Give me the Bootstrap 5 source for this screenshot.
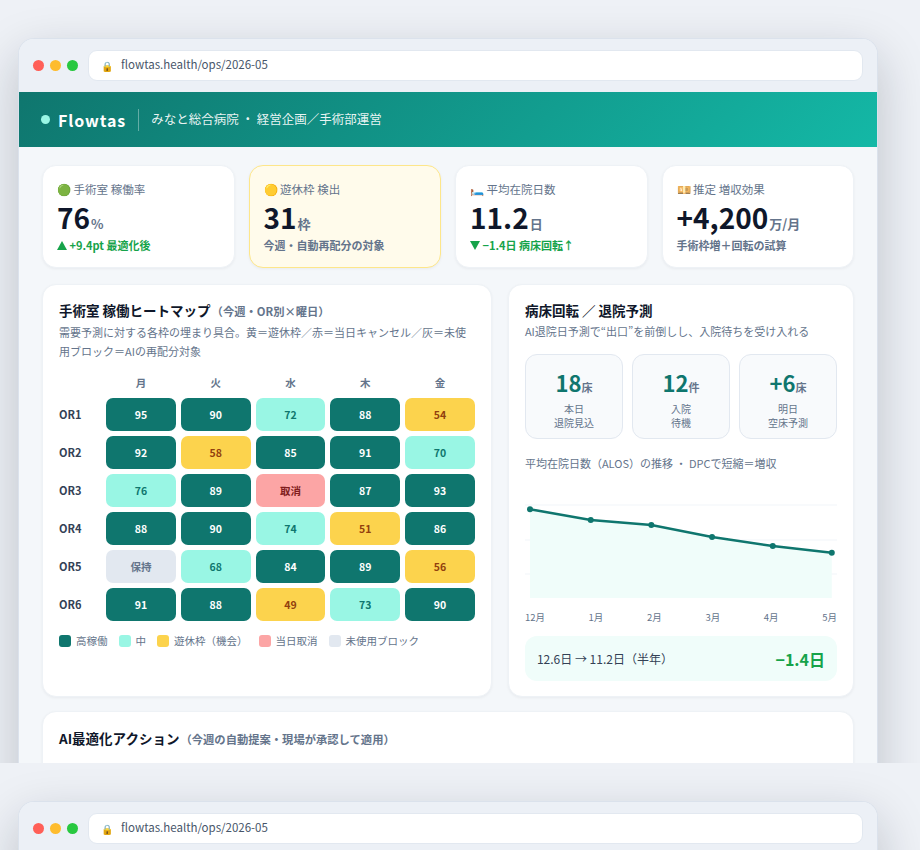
<!DOCTYPE html>
<html lang="ja">
<head>
<meta charset="utf-8">
<title>Flowtas</title>
<link href="https://cdn.jsdelivr.net/npm/bootstrap@5.3.0/dist/css/bootstrap.min.css" rel="stylesheet">
<style>
html,body{background:#eef1f6;}
body{font-family:"Noto Sans CJK JP","Noto Sans",sans-serif;color:#0f172a;margin:0;}
.shot{height:763px;overflow:hidden;padding:38px 42px 0 18px;background:#eef1f6;}
.shot-last{height:400px;}
.win{border:1px solid #dbe2ec;border-bottom:0;border-radius:16px 16px 0 0;background:#f4f7fa;box-shadow:0 18px 50px rgba(15,23,42,.22);overflow:hidden;min-height:900px;}
.bar{height:53px;background:#ecf0f6;padding:0 14px 1px 14px;}
.dots{column-gap:6px;}
.dotx{width:11px;height:11px;border-radius:50%;}
.d-r{background:#ff5f57;}
.d-y{background:#febc2e;}
.d-g{background:#28c840;}
.addr{height:31px;background:#fff;border:1px solid #e2e8f0;border-radius:9px;padding-left:12px;font-size:11.5px;color:#475569;margin-left:10px;gap:8px;}
.lockx{font-size:10px;}
.hdr{height:55px;background:linear-gradient(135deg,#0f766e,#14b8a6);padding:0 22px;color:#fff;}
.hdot{width:9px;height:9px;border-radius:50%;background:#99f6e4;margin-right:8px;}
.brand{font-size:16px;font-weight:700;letter-spacing:.9px;line-height:1;}
.hsep{width:1px;height:22px;background:rgba(255,255,255,.35);margin:0 12px 0 12px;}
.hsub{font-size:12.5px;color:rgba(255,255,255,.92);}
.body-x{padding:18px 23px 0 23px;}
.kpis{display:grid;grid-template-columns:repeat(4,1fr);gap:14px;}
.kpi{background:#fff;border:1px solid #eef2f6;border-radius:14px;padding:15px 14px 12px;height:103px;box-shadow:0 1px 3px rgba(15,23,42,.05);}
.kpi-warn{background:#fffbeb;border-color:#fde68a;}
.kl{font-size:11.5px;color:#64748b;line-height:17px;}
.kv{font-size:28px;font-weight:700;line-height:26px;margin-top:6px;}
.kv span{font-size:13px;font-weight:700;color:#64748b;margin-left:1px;}
.kd{font-size:11px;font-weight:700;color:#64748b;line-height:16px;}
.kd-g{color:#16a34a;}
.tri{display:inline-block;width:0;height:0;border-left:5.5px solid transparent;border-right:5.5px solid transparent;}
.tri-up{border-bottom:9px solid #16a34a;}
.tri-dn{border-top:9px solid #16a34a;}
.panels{display:grid;grid-template-columns:1.3fr 1fr;gap:16px;margin-top:16px;}
.pnl{background:#fff;border:1px solid #eef2f6;border-radius:14px;padding:14px 16px 15px;box-shadow:0 1px 3px rgba(15,23,42,.05);}
.pt{font-size:13.5px;font-weight:700;line-height:22px;margin:0;}
.pt span{font-size:11.3px;font-weight:700;color:#64748b;margin-left:1px;}
.ps{font-size:11px;color:#64748b;line-height:19px;margin:1px 0 0;}
.hm{display:grid;grid-template-columns:42px repeat(5,1fr);gap:5px;margin-top:14px;align-items:center;}
.hh{font-size:10.5px;font-weight:700;color:#64748b;text-align:center;line-height:15px;margin-bottom:3px;}
.hr-l{font-size:11px;font-weight:700;color:#334155;}
.c{height:33px;border-radius:7px;font-size:10.5px;font-weight:700;}
.c-h{background:#0f766e;color:#fff;}
.c-m{background:#99f6e4;color:#0f766e;}
.c-i{background:#fcd34d;color:#92400e;}
.c-x{background:#fca5a5;color:#7f1d1d;}
.c-b{background:#e2e8f0;color:#64748b;}
.lg{margin-top:12px;gap:11px;font-size:10.5px;color:#64748b;line-height:16px;}
.sw{width:12px;height:12px;border-radius:3px;margin-right:5px;}
.sts{display:grid;grid-template-columns:repeat(3,1fr);gap:9px;margin-top:13px;}
.st{height:85px;background:#f8fafc;border:1px solid #e2e8f0;border-radius:12px;text-align:center;padding-top:12px;}
.sn{font-size:22px;font-weight:700;color:#0f766e;line-height:30px;}
.sn span{font-size:11px;font-weight:700;color:#64748b;}
.sl{font-size:10px;color:#64748b;line-height:14px;}
.cap{font-size:11px;color:#64748b;line-height:16px;margin-top:16px;}
.cht{display:block;width:100%;height:114px;margin-top:17px;}
.xl{font-size:9.5px;color:#64748b;line-height:14px;margin-top:8px;}
.sum{height:45px;background:#f0fdfa;border-radius:12px;padding:0 12px;margin-top:12px;font-size:12px;color:#334155;}
.sum b{font-size:16px;font-weight:700;color:#16a34a;}
.pnl-ai{margin-top:14px;padding-top:15px;min-height:300px;}
</style>
</head>
<body>
<section class="shot">
 <div class="win">
  <div class="bar d-flex align-items-center">
   <div class="dots d-flex"><span class="dotx d-r"></span><span class="dotx d-y"></span><span class="dotx d-g"></span></div>
   <div class="addr flex-grow-1 d-flex align-items-center"><span class="lockx">🔒</span><span>flowtas.health/ops/2026-05</span></div>
  </div>
  <div class="hdr d-flex align-items-center">
   <span class="hdot"></span><span class="brand">Flowtas</span><span class="hsep"></span><span class="hsub">みなと総合病院 ・ 経営企画／手術部運営</span>
  </div>
  <div class="body-x">
   <div class="kpis">
    <div class="kpi"><div class="kl">🟢 手術室 稼働率</div><div class="kv">76<span>%</span></div><div class="kd kd-g"><i class="tri tri-up"></i> +9.4pt 最適化後</div></div>
    <div class="kpi kpi-warn"><div class="kl">🟡 遊休枠 検出</div><div class="kv">31<span>枠</span></div><div class="kd">今週・自動再配分の対象</div></div>
    <div class="kpi"><div class="kl">🛏️ 平均在院日数</div><div class="kv">11.2<span>日</span></div><div class="kd kd-g"><i class="tri tri-dn"></i> −1.4日 病床回転↑</div></div>
    <div class="kpi"><div class="kl">💴 推定 増収効果</div><div class="kv">+4,200<span>万/月</span></div><div class="kd">手術枠増＋回転の試算</div></div>
   </div>
   <div class="panels">
    <div class="pnl">
     <h3 class="pt">手術室 稼働ヒートマップ<span>（今週・OR別×曜日）</span></h3>
     <p class="ps">需要予測に対する各枠の埋まり具合。黄＝遊休枠／赤＝当日キャンセル／灰＝未使用ブロック＝AIの再配分対象</p>
     <div class="hm">
      <div></div><div class="hh">月</div><div class="hh">火</div><div class="hh">水</div><div class="hh">木</div><div class="hh">金</div>
      <div class="hr-l">OR1</div><div class="c c-h d-flex align-items-center justify-content-center">95</div><div class="c c-h d-flex align-items-center justify-content-center">90</div><div class="c c-m d-flex align-items-center justify-content-center">72</div><div class="c c-h d-flex align-items-center justify-content-center">88</div><div class="c c-i d-flex align-items-center justify-content-center">54</div>
      <div class="hr-l">OR2</div><div class="c c-h d-flex align-items-center justify-content-center">92</div><div class="c c-i d-flex align-items-center justify-content-center">58</div><div class="c c-h d-flex align-items-center justify-content-center">85</div><div class="c c-h d-flex align-items-center justify-content-center">91</div><div class="c c-m d-flex align-items-center justify-content-center">70</div>
      <div class="hr-l">OR3</div><div class="c c-m d-flex align-items-center justify-content-center">76</div><div class="c c-h d-flex align-items-center justify-content-center">89</div><div class="c c-x d-flex align-items-center justify-content-center">取消</div><div class="c c-h d-flex align-items-center justify-content-center">87</div><div class="c c-h d-flex align-items-center justify-content-center">93</div>
      <div class="hr-l">OR4</div><div class="c c-h d-flex align-items-center justify-content-center">88</div><div class="c c-h d-flex align-items-center justify-content-center">90</div><div class="c c-m d-flex align-items-center justify-content-center">74</div><div class="c c-i d-flex align-items-center justify-content-center">51</div><div class="c c-h d-flex align-items-center justify-content-center">86</div>
      <div class="hr-l">OR5</div><div class="c c-b d-flex align-items-center justify-content-center">保持</div><div class="c c-m d-flex align-items-center justify-content-center">68</div><div class="c c-h d-flex align-items-center justify-content-center">84</div><div class="c c-h d-flex align-items-center justify-content-center">89</div><div class="c c-i d-flex align-items-center justify-content-center">56</div>
      <div class="hr-l">OR6</div><div class="c c-h d-flex align-items-center justify-content-center">91</div><div class="c c-h d-flex align-items-center justify-content-center">88</div><div class="c c-i d-flex align-items-center justify-content-center">49</div><div class="c c-m d-flex align-items-center justify-content-center">73</div><div class="c c-h d-flex align-items-center justify-content-center">90</div>
     </div>
     <div class="lg d-flex align-items-center">
      <span class="d-flex align-items-center"><i class="sw c-h"></i>高稼働</span>
      <span class="d-flex align-items-center"><i class="sw c-m"></i>中</span>
      <span class="d-flex align-items-center"><i class="sw c-i"></i>遊休枠（機会）</span>
      <span class="d-flex align-items-center"><i class="sw c-x"></i>当日取消</span>
      <span class="d-flex align-items-center"><i class="sw c-b"></i>未使用ブロック</span>
     </div>
    </div>
    <div class="pnl d-flex flex-column">
     <h3 class="pt">病床回転 ／ 退院予測</h3>
     <p class="ps">AI退院日予測で“出口”を前倒しし、入院待ちを受け入れる</p>
     <div class="sts">
      <div class="st"><div class="sn">18<span>床</span></div><div class="sl">本日<br>退院見込</div></div>
      <div class="st"><div class="sn">12<span>件</span></div><div class="sl">入院<br>待機</div></div>
      <div class="st"><div class="sn">+6<span>床</span></div><div class="sl">明日<br>空床予測</div></div>
     </div>
     <div class="cap">平均在院日数（ALOS）の推移 ・ DPCで短縮＝増収</div>
     <svg class="cht" viewBox="0 0 312 114" preserveAspectRatio="none" aria-hidden="true">
      <g stroke="#f1f5f9" stroke-width="1"><line x1="0" y1="17" x2="312" y2="17"/><line x1="0" y1="52" x2="312" y2="52"/><line x1="0" y1="86" x2="312" y2="86"/></g>
      <polygon points="5,21.3 65.7,32 126.3,37 187,49 247.7,58 306.7,64.7 306.7,110 5,110" fill="#f0fdfa"/>
      <polyline points="5,21.3 65.7,32 126.3,37 187,49 247.7,58 306.7,64.7" fill="none" stroke="#0f766e" stroke-width="2.5"/>
      <g fill="#0f766e"><circle cx="5" cy="21.3" r="3"/><circle cx="65.7" cy="32" r="3"/><circle cx="126.3" cy="37" r="3"/><circle cx="187" cy="49" r="3"/><circle cx="247.7" cy="58" r="3"/><circle cx="306.7" cy="64.7" r="3"/></g>
     </svg>
     <div class="xl d-flex justify-content-between"><span>12月</span><span>1月</span><span>2月</span><span>3月</span><span>4月</span><span>5月</span></div>
     <div class="sum d-flex align-items-center justify-content-between"><span>12.6日 → 11.2日（半年）</span><b>−1.4日</b></div>
    </div>
   </div>
   <div class="pnl pnl-ai"><h3 class="pt">AI最適化アクション<span>（今週の自動提案・現場が承認して適用）</span></h3></div>
  </div>
 </div>
</section>
<section class="shot shot-last">
 <div class="win">
  <div class="bar d-flex align-items-center">
   <div class="dots d-flex"><span class="dotx d-r"></span><span class="dotx d-y"></span><span class="dotx d-g"></span></div>
   <div class="addr flex-grow-1 d-flex align-items-center"><span class="lockx">🔒</span><span>flowtas.health/ops/2026-05</span></div>
  </div>
  <div class="hdr"></div>
 </div>
</section>
<script src="https://cdn.jsdelivr.net/npm/bootstrap@5.3.0/dist/js/bootstrap.bundle.min.js"></script>
</body>
</html>
